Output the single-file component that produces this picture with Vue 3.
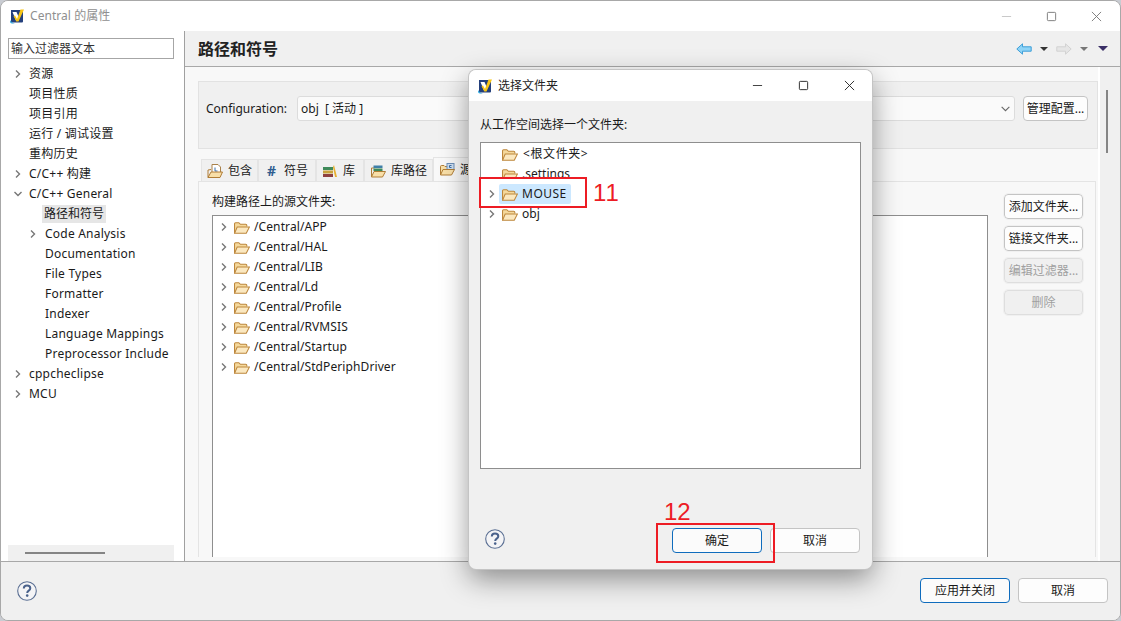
<script setup>
const nav = [
  { t: '资源', a: 1, d: 0 }, { t: '项目性质', d: 0 }, { t: '项目引用', d: 0 }, { t: '运行 / 调试设置', d: 0 },
  { t: '重构历史', d: 0 }, { t: 'C/C++ 构建', a: 1, d: 0 }, { t: 'C/C++ General', a: 2, d: 0 },
  { t: '路径和符号', d: 1, sel: 1 }, { t: 'Code Analysis', a: 1, d: 1 }, { t: 'Documentation', d: 1 },
  { t: 'File Types', d: 1 }, { t: 'Formatter', d: 1 }, { t: 'Indexer', d: 1 }, { t: 'Language Mappings', d: 1 },
  { t: 'Preprocessor Include', d: 1 }, { t: 'cppcheclipse', a: 1, d: 0 }, { t: 'MCU', a: 1, d: 0 },
]
const sources = ['APP', 'HAL', 'LIB', 'Ld', 'Profile', 'RVMSIS', 'Startup', 'StdPeriphDriver'].map(s => '/Central/' + s)
const sideButtons = [
  { t: '添加文件夹...' }, { t: '链接文件夹...' }, { t: '编辑过滤器...', off: 1 }, { t: '删除', off: 1 },
]
const folderPath = 'M1.500 12.500V3.500c0-.6.4-1 1-1h3l1.500 1.500h5c.6 0 1 .4 1 1V6'
const folderFront = 'M1.500 12.500 4 6.500h11.500l-3 6z'
</script>

<template>
  <div class="window">
    <header class="titlebar">
      <svg class="logo" viewBox="0 0 16 16"><path d="M2 2h12v11.500q0 1-1 1H3q-1 0-1-1z" fill="#24407c"/><path d="M3.500 4h4l1.500 3.500L9 12.500H7z" fill="#fff"/><path d="M6 7.500 8 11 11.500 1.500H15L9.500 13.500H7.300L4.500 8z" fill="#f7c516"/><path d="M1 12c1 2 2.500 3 5 3.500H3q-2 0-2-2z" fill="#2aa8e0"/></svg>
      <span class="title-text">Central 的属性</span>
      <div class="winctl">
        <svg viewBox="0 0 12 12"><path d="M1 6h10" stroke="#c4c4c4" fill="none"/></svg>
        <svg viewBox="0 0 12 12"><rect x="1.500" y="1.500" width="9" height="9" rx="1" stroke="#777" fill="none"/></svg>
        <svg viewBox="0 0 12 12"><path d="M1 1l10 10M11 1 1 11" stroke="#777" fill="none"/></svg>
      </div>
    </header>

    <div class="main">
      <aside class="sidebar">
        <div class="filter">输入过滤器文本</div>
        <ul class="nav">
          <li v-for="n in nav" :key="n.t" class="nav-row" :class="'depth' + n.d">
            <svg v-if="n.a" class="chev" viewBox="0 0 10 10"><path :d="n.a === 2 ? 'M1.500 3 5 6.500 8.500 3' : 'M3 1.500 6.500 5 3 8.500'" stroke="#777" stroke-width="1.400" fill="none"/></svg>
            <span v-else class="chev"></span>
            <span class="nav-text" :class="{ selected: n.sel }">{{ n.t }}</span>
          </li>
        </ul>
        <div class="hscroll"><i></i></div>
      </aside>

      <section class="content">
        <div class="head">
          <h1>路径和符号</h1>
          <div class="head-tools">
            <svg class="arrow" viewBox="0 0 16 12"><path d="M.8 6 6.500.8v3h8.700v4.400H6.500v3z" fill="#8ed4f7" stroke="#3f9fd8"/></svg>
            <i class="tri dark"></i>
            <svg class="arrow next" viewBox="0 0 16 12"><path d="M15.200 6 9.500.8v3H.8v4.400h8.700v3z" fill="#e6e6e6" stroke="#d2d2d2"/></svg>
            <i class="tri mid"></i>
            <i class="tri purple"></i>
          </div>
        </div>

        <div class="body">
          <div class="scrollable">
            <div class="config">
              <span class="config-label">Configuration:</span>
              <div class="select">
                <span>obj&nbsp; [ 活动 ]</span>
                <svg viewBox="0 0 10 10"><path d="M1.500 3.500 5 7 8.500 3.500" stroke="#666" fill="none"/></svg>
              </div>
              <button class="btn manage">管理配置...</button>
            </div>

            <div class="tabs">
              <div class="tab t1"><svg viewBox="0 0 16 16"><path d="M5 10V1.500h6l2.500 2.500v5" fill="#fff" stroke="#a9814a"/><path d="M8 4.500v3.500h2.500" stroke="#3b6ea8" fill="none"/><path d="M1 14.500 4 9h11.500l-2.500 5.500z" fill="#f8dfa8" stroke="#b07d36"/><path d="M1 14.500V7l3-.5" stroke="#b07d36" fill="none"/></svg>包含</div>
              <div class="tab t2"><b class="hash">#</b>符号</div>
              <div class="tab t3"><svg viewBox="0 0 16 16"><rect x="1" y="4" width="10" height="3" fill="#3f8a5a"/><rect x="1" y="7.500" width="10" height="3" fill="#c9a23c"/><rect x="1" y="11" width="10" height="3" fill="#8e3f3f"/><path d="m12 2 3 12h-2L11 4z" fill="#e8b030"/></svg>库</div>
              <div class="tab t4"><svg viewBox="0 0 16 16"><path d="M1.500 14V5h3" fill="none" stroke="#b07d36"/><rect x="3.500" y="2.500" width="9" height="2.500" fill="#3f7fa8"/><rect x="3.500" y="5.500" width="9" height="2.500" fill="#3f8a5a"/><path d="M1.500 14 4 8.500h11.500l-3 5.500z" fill="#f8dfa8" stroke="#b07d36"/></svg>库路径</div>
              <div class="tab t5 active"><svg viewBox="0 0 16 16"><path d="M1.500 13V4.500c0-.6.4-1 1-1h2.500l1 1h3" fill="#f8dfa8" stroke="#b07d36"/><rect x="8" y="1.500" width="7" height="6" fill="#cfe0f2" stroke="#6d8fb8"/><path d="M12.500 3.500h-2v2h2" stroke="#3b6ea8" fill="none"/><path d="M1.500 13 4 7.500h11.500l-3 5.500z" fill="#f8dfa8" stroke="#b07d36"/></svg>源</div>
            </div>

            <div class="panel">
              <div class="panel-left">
                <div class="panel-label">构建路径上的源文件夹:</div>
                <ul class="src-tree">
                  <li v-for="s in sources" :key="s" class="tree-row">
                    <svg class="chev" viewBox="0 0 10 10"><path d="M3 1.500 6.500 5 3 8.500" stroke="#777" stroke-width="1.400" fill="none"/></svg>
                    <svg class="folder" viewBox="1 2 15 11"><path :d="folderPath" fill="#f5d99c" stroke="#bd873c"/><path :d="folderFront" fill="#fbe8c0" stroke="#bd873c"/></svg>
                    <span>{{ s }}</span>
                  </li>
                </ul>
              </div>
              <div class="panel-btns">
                <button v-for="b in sideButtons" :key="b.t" class="btn side" :class="{ off: b.off }">{{ b.t }}</button>
              </div>
            </div>
          </div>
          <div class="vscroll"><i></i></div>
        </div>
      </section>
    </div>

    <footer class="footer">
      <svg class="help" viewBox="0 0 20 20"><circle cx="10" cy="10" r="9.300" fill="#f4f4f6" stroke="#5a6f93" stroke-width="1.100"/><path d="M6.800 7.500C6.800 5.500 8.300 4.600 10 4.600c1.900 0 3.300 1 3.300 2.700 0 2.400-3.100 2.300-3.100 4.600" stroke="#4a628c" stroke-width="2" fill="none"/><circle cx="10.200" cy="14.600" r="1.300" fill="#4a628c"/></svg>
      <div class="footer-btns">
        <button class="btn wide primary">应用并关闭</button>
        <button class="btn wide">取消</button>
      </div>
    </footer>

    <div class="dialog">
      <header class="dlg-title">
        <svg class="logo" viewBox="0 0 16 16"><path d="M2 2h12v11.500q0 1-1 1H3q-1 0-1-1z" fill="#24407c"/><path d="M3.500 4h4l1.500 3.500L9 12.500H7z" fill="#fff"/><path d="M6 7.500 8 11 11.500 1.500H15L9.500 13.500H7.300L4.500 8z" fill="#f7c516"/><path d="M1 12c1 2 2.500 3 5 3.500H3q-2 0-2-2z" fill="#2aa8e0"/></svg>
        <span>选择文件夹</span>
        <div class="dlg-ctl">
          <svg viewBox="0 0 12 12"><path d="M1 6h10" stroke="#333" fill="none"/></svg>
          <svg viewBox="0 0 12 12"><rect x="1.500" y="1.500" width="9" height="9" rx="1" stroke="#222" fill="none"/></svg>
          <svg viewBox="0 0 12 12"><path d="M1 1l10 10M11 1 1 11" stroke="#222" fill="none"/></svg>
        </div>
      </header>
      <div class="dlg-body">
        <div class="dlg-label">从工作空间选择一个文件夹:</div>
        <ul class="dlg-tree">
          <li class="dlg-row">
            <span class="chev"></span>
            <svg class="folder" viewBox="1 2 15 11"><path :d="folderPath" fill="#f5d99c" stroke="#bd873c"/><path :d="folderFront" fill="#fbe8c0" stroke="#bd873c"/></svg>
            <span class="dlg-name root">&lt;根文件夹&gt;</span>
          </li>
          <li class="dlg-row">
            <span class="chev"></span>
            <svg class="folder" viewBox="1 2 15 11"><path :d="folderPath" fill="#f5d99c" stroke="#bd873c"/><path :d="folderFront" fill="#fbe8c0" stroke="#bd873c"/></svg>
            <span class="dlg-name">.settings</span>
          </li>
          <li class="dlg-row marked">
            <div class="mark-box">
              <svg class="chev" viewBox="0 0 10 10"><path d="M3 1.500 6.500 5 3 8.500" stroke="#777" stroke-width="1.400" fill="none"/></svg>
              <div class="mouse-sel">
                <svg class="folder" viewBox="1 2 15 11"><path :d="folderPath" fill="#f5d99c" stroke="#bd873c"/><path :d="folderFront" fill="#fbe8c0" stroke="#bd873c"/></svg>
                <span class="mouse-name">MOUSE</span>
              </div>
            </div>
            <span class="num n11">11</span>
          </li>
          <li class="dlg-row">
            <svg class="chev" viewBox="0 0 10 10"><path d="M3 1.500 6.500 5 3 8.500" stroke="#777" stroke-width="1.400" fill="none"/></svg>
            <svg class="folder" viewBox="1 2 15 11"><path :d="folderPath" fill="#f5d99c" stroke="#bd873c"/><path :d="folderFront" fill="#fbe8c0" stroke="#bd873c"/></svg>
            <span class="dlg-name">obj</span>
          </li>
        </ul>
        <div class="dlg-foot">
          <svg class="help dlg-help" viewBox="0 0 20 20"><circle cx="10" cy="10" r="9.300" fill="#f4f4f6" stroke="#5a6f93" stroke-width="1.100"/><path d="M6.800 7.500C6.800 5.500 8.300 4.600 10 4.600c1.900 0 3.300 1 3.300 2.700 0 2.400-3.100 2.300-3.100 4.600" stroke="#4a628c" stroke-width="2" fill="none"/><circle cx="10.200" cy="14.600" r="1.300" fill="#4a628c"/></svg>
          <div class="footer-btns dlg-btns">
            <button class="btn wide primary">确定</button>
            <button class="btn wide">取消</button>
            <span class="num n12">12</span>
            <i class="ok-mark"></i>
          </div>
        </div>
      </div>
    </div>
  </div>
</template>

<style>
html, body { margin: 0; padding: 0; background: #c9ccd2; overflow: hidden; }
</style>

<style scoped>
.window {
  position: relative;
  width: 1121px;
  height: 621px;
  box-sizing: border-box;
  display: flex;
  flex-direction: column;
  border: 1px solid #a8a8a8;
  border-radius: 8px;
  overflow: hidden;
  background: #f0f0f0;
  font: 12px/16px "Noto Sans", "Noto Sans CJK SC", sans-serif;
  color: #1a1a1a;
}
ul { list-style: none; margin: 0; padding: 0; }
.titlebar {
  height: 30px;
  flex: none;
  display: flex;
  align-items: center;
  background: #fff;
  padding-left: 8px;
}
.logo { width: 16px; height: 16px; flex: none; }
.title-text { margin-left: 5px; color: #8f8f8f; letter-spacing: .05px; }
.winctl { margin-left: auto; display: flex; gap: 34px; padding-right: 18px; align-items: center; }
.winctl svg { width: 11px; height: 11px; }

.main { flex: 1; display: flex; min-height: 0; }
.sidebar {
  flex: none;
  background: #fff;
  border-right: 1px solid #a0a0a0;
  padding: 7px 10px 0 7px;
  box-sizing: content-box;
  width: 166px;
  display: flex;
  flex-direction: column;
}
.filter {
  height: 19px;
  line-height: 19px;
  border: 1px solid #a6a6a6;
  padding-left: 2px;
  color: #333;
  box-sizing: content-box;
  width: 162px;
}
.nav { margin-top: 5px; flex: 1; }
.nav-row { height: 20px; display: flex; align-items: center; white-space: nowrap; }
.depth0 { padding-left: 5px; }
.depth1 { padding-left: 20px; }
.chev { width: 10px; height: 10px; flex: none; margin-right: 6px; }
.depth0 .chev { margin-right: 5px; }
.nav-text { padding: 0 1px; height: 18px; line-height: 18px; letter-spacing: .22px; }
.nav-text.selected { background: #e6e6e6; padding: 0 2px; margin-left: -2px; letter-spacing: 0; }
.hscroll { height: 16px; background: #f0f0f0; display: flex; align-items: center; padding-left: 17px; flex: none; }
.hscroll i { display: block; width: 80px; height: 2px; background: #858585; }

.content { flex: 1; min-width: 0; display: flex; flex-direction: column; }
.head {
  height: 35px;
  flex: none;
  display: flex;
  align-items: center;
  background: #f0f0f0;
  border-bottom: 1px solid #a8a8a8;
  padding: 0 12px 0 13px;
}
h1 { margin: 0; font-size: 16px; font-weight: 700; color: #222; }
.head-tools { margin-left: auto; display: flex; align-items: center; }
.arrow { width: 16px; height: 12px; }
.tri { display: block; width: 0; height: 0; border: 4px solid transparent; border-bottom-width: 0; border-top-width: 4px; }
.tri.dark { border-top-color: #333; margin: 0 8px; }
.tri.mid { border-top-color: #777; margin: 0 10px 0 8px; }
.tri.purple { border-top-color: #3a2f66; border-left-width: 5px; border-right-width: 5px; border-top-width: 5px; }

.body { flex: 1; min-height: 0; display: flex; }
.scrollable {
  flex: 1;
  min-width: 0;
  background: #f8f8f8;
  border-right: 2px solid #fff;
  padding: 14px 0 4px 13px;
  display: flex;
  flex-direction: column;
}
.vscroll { width: 20px; flex: none; background: #f0f0f0; display: flex; padding: 23px 0 0 6px; box-sizing: border-box; }
.vscroll i { display: block; width: 2px; height: 63px; background: #858585; }

.config {
  height: 68px;
  flex: none;
  box-sizing: border-box;
  background: #f0f0f0;
  border: 1px solid #e2e2e2;
  display: flex;
  align-items: flex-start;
  padding: 14px 9px 0 7px;
}
.config-label { line-height: 25px; width: 91px; flex: none; }
.select {
  flex: 1;
  height: 25px;
  box-sizing: border-box;
  background: #fafafa;
  border: 1px solid #dcdcdc;
  border-radius: 3px;
  display: flex;
  align-items: center;
  justify-content: space-between;
  padding: 0 3px;
}
.select svg { width: 11px; height: 11px; }
.btn {
  font: inherit;
  color: #1a1a1a;
  height: 25px;
  box-sizing: border-box;
  background: #fdfdfd;
  border: 1px solid #c4c4c4;
  border-radius: 4px;
  padding: 0;
  white-space: nowrap;
  flex: none;
}
.manage { width: 65px; margin-left: 8px; }

.tabs { height: 32px; flex: none; display: flex; align-items: flex-end; padding-left: 3px; }
.tab {
  height: 22px;
  box-sizing: border-box;
  background: #f0f0f0;
  border: 1px solid #e4e4e4;
  border-bottom: none;
  display: flex;
  align-items: center;
  padding-left: 5px;
  gap: 5px;
}
.tab svg { width: 16px; height: 16px; flex: none; }
.t1 { width: 57px; }
.t2 { width: 58px; padding-left: 8px; gap: 8px; }
.t3 { width: 48px; }
.t4 { width: 69px; }
.t5 { width: 60px; }
.tab.active { height: 24px; background: #f8f8f8; }
.hash { color: #2f5d8f; font-size: 14px; font-weight: 700; line-height: 16px; }

.panel {
  flex: 1;
  min-height: 0;
  margin-right: 2px;
  background: #f8f8f8;
  border: 1px solid #e4e4e4;
  border-bottom: none;
  display: flex;
  padding: 0 12px 0 13px;
}
.panel-left { flex: 1; min-width: 0; display: flex; flex-direction: column; }
.panel-label { height: 33px; line-height: 16px; padding-top: 12px; box-sizing: border-box; }
.src-tree {
  flex: 1;
  min-height: 0;
  background: #fff;
  border: 1px solid #8e8e8e;
  border-bottom: none;
  padding-top: 1px;
}
.tree-row { height: 20px; display: flex; align-items: center; padding-left: 6px; white-space: nowrap; letter-spacing: .1px; }
.tree-row .chev { margin-right: 5px; }
.folder { width: 16px; height: 12px; flex: none; margin-right: 4px; margin-top: 1px; }
.panel-btns { width: 79px; margin-left: 16px; padding-top: 12px; display: flex; flex-direction: column; gap: 7px; flex: none; }
.side { width: 79px; outline: 1px solid #f0f0f0; }
.side.off { background: #f0f0f0; border-color: #dedede; color: #a0a0a0; }

.footer {
  height: 59px;
  flex: none;
  box-sizing: border-box;
  background: #f0f0f0;
  border-top: 1px solid #a8a8a8;
  display: flex;
  align-items: center;
  padding: 0 12px 1px 16px;
}
.help { width: 20px; height: 20px; flex: none; }
.footer-btns { margin-left: auto; display: flex; gap: 8px; }
.wide { width: 90px; }
.primary { border-color: #0f6cbd; background: #fbfbfb; }

.dialog {
  position: absolute;
  left: 468px;
  top: 69px;
  width: 403px;
  height: 499px;
  display: flex;
  flex-direction: column;
  background: #f0f0f0;
  border-radius: 7px;
  box-shadow: 0 0 0 1px #c4c4c4, 0 10px 28px rgba(0, 0, 0, 0.42);
}
.dlg-title {
  height: 31px;
  flex: none;
  background: #fff;
  border-radius: 7px 7px 0 0;
  display: flex;
  align-items: center;
  padding-left: 8px;
  gap: 5px;
  color: #222;
}
.dlg-ctl { margin-left: auto; display: flex; align-items: center; gap: 35px; padding-right: 17px; }
.dlg-ctl svg { width: 11px; height: 11px; }
.dlg-body { flex: 1; min-height: 0; display: flex; flex-direction: column; padding: 0 12px 0 11px; }
.dlg-label { height: 41px; line-height: 16px; padding-top: 16px; box-sizing: border-box; }
.dlg-tree { height: 327px; flex: none; box-sizing: border-box; background: #fff; border: 1px solid #8e8e8e; padding-top: 1px; margin-right: -1px; }
.dlg-row { height: 20px; display: flex; align-items: center; padding-left: 6px; white-space: nowrap; position: relative; }
.dlg-row .chev { margin-right: 4px; }
.dlg-row .folder { margin-left: 1px; margin-right: 4px; }
.dlg-name { line-height: 16px; }
.dlg-name.root { margin-left: 1px; letter-spacing: .6px; }
.mark-box {
  position: absolute;
  left: -2px;
  top: -7px;
  width: 108px;
  height: 31px;
  box-sizing: border-box;
  background: #fff;
  border: 2px solid #ed1c24;
  display: flex;
  align-items: flex-start;
  padding: 5px 0 0 6px;
}
.mark-box .chev { margin: 5px 2px 0 0; }
.mouse-sel { background: #cce8ff; border-radius: 2px; height: 20px; width: 72px; flex: none; display: flex; align-items: center; }
.mark-box .mouse-sel .folder { margin: 1px 4px 0 3px; }
.mouse-name { letter-spacing: .5px; }
.num { position: absolute; color: #ed1c24; font: 24px/28px "Liberation Sans", sans-serif; }
.n11 { left: 112px; top: -5px; letter-spacing: 1px; }
.dlg-foot { flex: 1; display: flex; align-items: flex-start; padding: 59px 0 0 5px; }
.dlg-help { margin-top: 1px; }
.dlg-btns { position: relative; }
.n12 { left: -8px; top: -30px; }
.ok-mark { position: absolute; left: -16px; top: -5px; width: 119px; height: 40px; box-sizing: border-box; border: 2px solid #ed1c24; }
</style>
